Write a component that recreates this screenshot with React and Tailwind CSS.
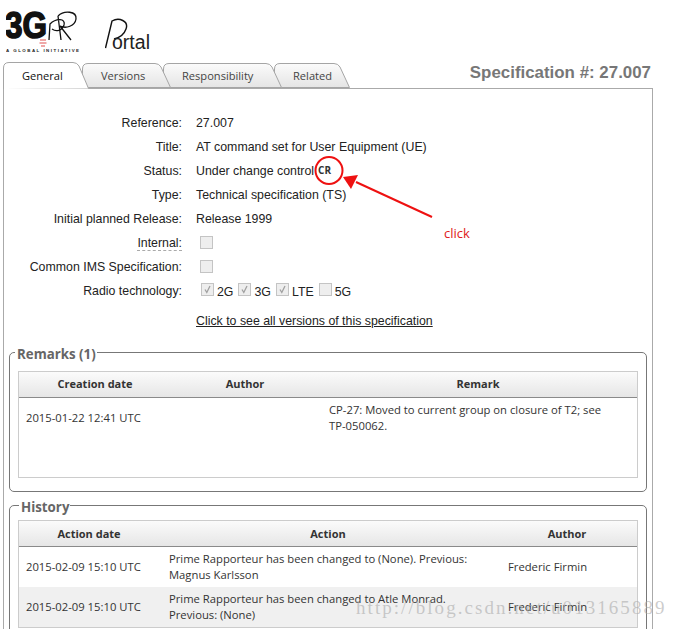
function Tab({ label, width, active, className }) {
  const h = active ? 27 : 25;
  return (
    <div className={`relative shrink-0 pl-[19px] ${className}`} style={{ width, height: h }}>
      <svg className="absolute left-0 top-0" width={width} height={h}>
        <defs>
          <linearGradient id={"tab-" + label} x1="0" y1="0" x2="0" y2="1">
            <stop offset="0" stopColor={active ? "#ffffff" : "#fbfbfb"} />
            <stop offset="1" stopColor={active ? "#ffffff" : "#e4e4e4"} />
          </linearGradient>
        </defs>
        <path
          d={`M0.5 ${h} V6 Q0.5 0.5 6 0.5 H${width - 16} Q${width - 12} 0.5 ${width - 10} 4 L${width - 0.5} ${h - 0.5}${active ? "" : ` H0.5`}`}
          fill={`url(#tab-${label})`}
          stroke="#a5a5a5"
        />
      </svg>
      <span className={`relative block font-['Open_Sans',sans-serif] text-[11.1px] ${active ? "leading-[27px] text-[#111]" : "leading-[25px] text-[#444]"}`}>
        {label}
      </span>
    </div>
  );
}

function Row({ label, dashed, children }) {
  return (
    <div className="flex h-[24px] items-center">
      <div className="w-[178px] text-right">
        <span className={dashed ? "border-b border-dashed border-[#aaa]" : ""}>{label}</span>
      </div>
      <div className="ml-[14px] flex items-center">{children}</div>
    </div>
  );
}

function Check({ checked, label }) {
  return (
    <div className="flex items-center mr-[5px]">
      <span className="-mt-[2px] flex h-[13px] w-[13px] items-center justify-center border border-[#c4c4c4] bg-[#eeeeee]">
        {checked && (
          <svg width="9" height="9" viewBox="0 0 9 9">
            <path d="M2 4.5 L3.8 7.5 L7 1" fill="none" stroke="#a0a0a0" strokeWidth="1.3" />
          </svg>
        )}
      </span>
      {label && <span className="ml-[3px] mt-[2px]">{label}</span>}
    </div>
  );
}

function Box({ title, legendClass, className, children }) {
  return (
    <fieldset className={`ml-[5px] w-[638px] rounded-[5px] border border-[#777] ${className}`}>
      <legend className={`pl-[2px] pr-[1px] pt-[4px] font-['Open_Sans',sans-serif] text-[13.3px] font-bold leading-[17px] text-[#666] ${legendClass}`}>
        {title}
      </legend>
      {children}
    </fieldset>
  );
}

function HeadCell({ className, children }) {
  return <div className={`text-center ${className}`}>{children}</div>;
}

function TableHead({ className, children }) {
  return (
    <div className={`flex h-[26px] items-center border-b border-[#8a8a8a] bg-gradient-to-b from-[#fbfbfb] to-[#e6e6e6] text-[11px] font-bold text-[#333] ${className}`}>
      {children}
    </div>
  );
}

function HistoryRow({ action, shaded }) {
  return (
    <div className={`flex h-[40px] items-center ${shaded ? "bg-[#f0f0f0]" : ""}`}>
      <div className="w-[150px] pl-[7px]">2015-02-09 15:10 UTC</div>
      <div className="w-[339px] pr-[32px] leading-[16px]">{action}</div>
      <div>Frederic Firmin</div>
    </div>
  );
}

export default function App() {
  return (
    <div className="relative h-[629px] w-[677px] overflow-hidden bg-white font-['Liberation_Sans',sans-serif] text-[12.35px] text-[#222]">
      <div className="flex h-[62px] pl-[6px] pt-[3px]">
        <svg width="80" height="52" viewBox="0 -6 80 52">
          <text x="-1" y="29" fontFamily="Liberation Sans" fontWeight="bold" fontSize="37" stroke="#111" strokeWidth="1.600" fill="#111" textLength="42" lengthAdjust="spacingAndGlyphs">3G</text>
          <path d="M43 31 L44 15 C50 9 60 9 58 16 C56 22 50 23 46 20 M52 7 C58 1 71 2 70 10 C69 17 60 20 54 17 L65 31 M52 7 L55 31" fill="none" stroke="#111" strokeWidth="1.300" />
          <path d="M34 31 h6 M33.500 34 h7 M35 37 h4" stroke="#e05050" strokeWidth="1.200" />
          <text x="0" y="43" fontFamily="Liberation Sans" fontWeight="bold" fontSize="4.400" letterSpacing="1.5" fill="#222">A GLOBAL INITIATIVE</text>
        </svg>
        <svg className="ml-[19px] mt-[6px]" width="50" height="46" viewBox="0 0 50 46">
          <path d="M0.500 39 L7 12 C14 8 24 12 21 20 C19 26 13 29 9 30" fill="none" stroke="#111" strokeWidth="1.400" />
          <text x="7" y="39.500" fontFamily="Liberation Sans" fontSize="20" fill="#222" textLength="38" lengthAdjust="spacingAndGlyphs">ortal</text>
        </svg>
      </div>

      <div className="flex h-[26px] items-end pl-[3px]">
        <Tab label="General" width={86} active className="z-40 -mb-px" />
        <Tab label="Versions" width={89} className="z-30 -ml-[7px]" />
        <Tab label="Responsibility" width={119} className="z-20 -ml-[8px]" />
        <Tab label="Related" width={76} className="z-10 -ml-[8px]" />
        <div className="ml-auto mr-[26px] self-start pt-[1px] text-[16.9px] font-bold leading-[20px] text-[#777]">
          Specification #: 27.007
        </div>
      </div>

      <div className="ml-[3px] h-[560px] w-[650px] border border-[#aaa] pt-[22px]">
        <Row label="Reference:">27.007</Row>
        <Row label="Title:">AT command set for User Equipment (UE)</Row>
        <Row label="Status:">
          Under change control
          <span className="ml-[4px] font-['Open_Sans',sans-serif] text-[10px] font-bold text-[#333]">CR</span>
        </Row>
        <Row label="Type:">Technical specification (TS)</Row>
        <Row label="Initial planned Release:">Release 1999</Row>
        <Row label="Internal:" dashed><div className="pl-[4px]"><Check /></div></Row>
        <Row label="Common IMS Specification:"><div className="pl-[4px]"><Check /></div></Row>
        <Row label="Radio technology:">
          <div className="flex pl-[5px]">
            <Check checked label="2G" />
            <Check checked label="3G" />
            <Check checked label="LTE" />
            <Check label="5G" />
          </div>
        </Row>
        <div className="ml-[192px] mt-[11px] leading-[14px] underline">Click to see all versions of this specification</div>

        <Box title="Remarks (1)" legendClass="-ml-[3px]" className="mt-[14px] h-[150px] px-[8px]">
          <div className="mt-[8px] h-[107px] border border-[#cccccc] font-['Open_Sans',sans-serif] text-[11.25px] text-[#333]">
            <TableHead>
              <HeadCell className="w-[152px]">Creation date</HeadCell>
              <HeadCell className="w-[148px]">Author</HeadCell>
              <HeadCell className="flex-1">Remark</HeadCell>
            </TableHead>
            <div className="flex pt-[4px] leading-[16px]">
              <div className="w-[310px] pl-[7px] pt-[8px]">2015-01-22 12:41 UTC</div>
              <div className="w-[290px]">CP-27: Moved to current group on closure of T2; see TP-050062.</div>
            </div>
          </div>
        </Box>

        <Box title="History" legendClass="ml-[1px]" className="mt-[3px] h-[200px] px-[8px]">
          <div className="mt-[4px] border border-[#cccccc] font-['Open_Sans',sans-serif] text-[11.25px] text-[#333]">
            <TableHead className="pt-[1px]">
              <HeadCell className="w-[140px]">Action date</HeadCell>
              <HeadCell className="w-[338px]">Action</HeadCell>
              <HeadCell className="flex-1">Author</HeadCell>
            </TableHead>
            <HistoryRow action="Prime Rapporteur has been changed to (None). Previous: Magnus Karlsson" />
            <HistoryRow shaded action="Prime Rapporteur has been changed to Atle Monrad. Previous: (None)" />
          </div>
        </Box>
      </div>

      <svg className="absolute left-0 top-0" width="677" height="629">
        <circle cx="329" cy="170.500" r="13.500" fill="none" stroke="#ee1111" strokeWidth="2" />
        <path d="M432 217 L356 182" stroke="#ee1111" strokeWidth="2" />
        <path d="M343 177 L358 175 L351 189 Z" fill="#ee1111" />
      </svg>
      <div className="absolute left-[444px] top-[224px] font-['Open_Sans',sans-serif] text-[13px] text-[#e02020]">click</div>
      <div className="absolute left-[356px] top-[597px] font-['Liberation_Serif',serif] text-[19px] leading-[22px] tracking-[2.05px] text-[#aaa]/60">
        http://blog.csdn.net/u013165889
      </div>
    </div>
  );
}
